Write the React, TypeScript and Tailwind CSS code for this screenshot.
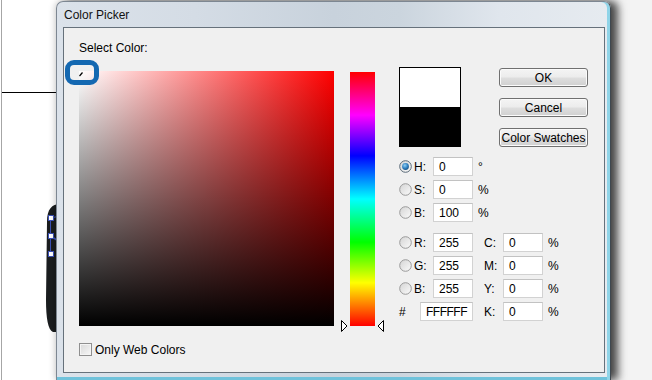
import React from "react";

function Radio({ checked = false }: { checked?: boolean }) {
  return (
    <svg width="13" height="13" viewBox="0 0 13 13" className="shrink-0">
      <defs>
        <linearGradient id="rfill" x1="0" y1="0" x2="1" y2="1">
          <stop offset="0" stopColor="#d4d4d4" />
          <stop offset="1" stopColor="#fbfbfb" />
        </linearGradient>
        <radialGradient id="rdot" cx="0.4" cy="0.35" r="0.7">
          <stop offset="0" stopColor="#8fd0f5" />
          <stop offset="0.6" stopColor="#2f7fc0" />
          <stop offset="1" stopColor="#17507f" />
        </radialGradient>
      </defs>
      <circle cx="6.5" cy="6.5" r="5.8" fill="url(#rfill)" stroke={checked ? "#5a6a78" : "#9a9a9a"} strokeWidth="1" />
      {checked && <circle cx="6.5" cy="6.5" r="3.4" fill="url(#rdot)" />}
    </svg>
  );
}

function Field({ value, w = "w-[40px]", tight = false }: { value: string; w?: string; tight?: boolean }) {
  return (
    <div className={`${w} h-[19px] bg-white border border-[#d2d2d2] border-t-[#c2c2c2] flex items-center pl-[5px] leading-none text-[12px] ${tight ? "tracking-[-0.5px]" : ""}`}>
      {value}
    </div>
  );
}

function HsbRow({ label, value, unit, checked = false }: { label: string; value: string; unit: string; checked?: boolean }) {
  return (
    <div className="flex items-center h-[19px]">
      <Radio checked={checked} />
      <span className="w-[21px] pl-[2px] leading-none">{label}</span>
      <Field value={value} />
      <span className="ml-[5px] leading-none">{unit}</span>
    </div>
  );
}

function RgbRow({ label, value, clabel, cvalue }: { label: string; value: string; clabel: string; cvalue: string }) {
  return (
    <div className="flex items-center h-[19px]">
      <Radio />
      <span className="w-[21px] pl-[2px] leading-none">{label}</span>
      <Field value={value} />
      <span className="ml-[11px] w-[19px] leading-none">{clabel}</span>
      <Field value={cvalue} />
      <span className="ml-[5px] leading-none">%</span>
    </div>
  );
}

function VButton({ children }: { children: React.ReactNode }) {
  return (
    <div className="w-[89px] h-[19px] rounded-[3px] border border-[#707070] bg-[linear-gradient(to_bottom,#f4f4f4_0%,#ececec_48%,#dedede_52%,#d0d0d0_100%)] shadow-[inset_0_0_0_1px_#fbfbfb] flex items-center justify-center leading-none text-[12px] whitespace-nowrap">
      {children}
    </div>
  );
}

export default function App() {
  return (
    <div className="relative w-[652px] h-[380px] overflow-hidden bg-[#f3f3f3] font-['Liberation_Sans',Arial,sans-serif] text-[12px] text-black">
      <div className="flex h-full">
        <div className="w-[100px] h-full bg-white">
          <svg width="100" height="380" viewBox="0 0 100 380">
            <line x1="1.5" y1="0" x2="1.5" y2="380" stroke="#a6a6a6" strokeWidth="1" />
            <line x1="2" y1="92.5" x2="60" y2="92.5" stroke="#000" strokeWidth="1" />
            <path d="M60 204 C52 204 47 209 47 222 L46 300 C46 318 48 330 53 332 L60 332 Z" fill="#1a1d1f" />
            <line x1="50.5" y1="218" x2="50.5" y2="254" stroke="#3b50b5" strokeWidth="1" />
            <line x1="50.5" y1="218" x2="60" y2="216" stroke="#3b50b5" strokeWidth="1" />
            <line x1="50.5" y1="236" x2="60" y2="242" stroke="#3b50b5" strokeWidth="1.5" />
            <rect x="48.5" y="215.5" width="5" height="5" fill="#fff" stroke="#3b50b5" />
            <rect x="48.5" y="233.5" width="5" height="5" fill="#fff" stroke="#3b50b5" />
            <rect x="48.5" y="251.5" width="5" height="5" fill="#fff" stroke="#3b50b5" />
          </svg>
        </div>
      </div>

      {/* Dialog window */}
      <div className="absolute left-[56px] top-[1px] w-[555px] h-[379px] flex flex-col rounded-t-[7px] border border-b-0 border-[#7d8792] border-r-[#3f4850] bg-[linear-gradient(to_right,#dbe2ea_0%,#d4dce5_25%,#c8d2dc_50%,#cbd5de_62%,#e0e6ed_80%,#e6ebf0_100%)] shadow-[inset_-3px_0_0_#8fd4e8,inset_0_-3px_0_#6fc2db,7px_0_8px_rgba(0,0,0,0.7),-2px_0_6px_rgba(0,0,0,0.15)]">
        <div className="h-[25px] flex items-center pl-[7px] leading-[14px] text-[12px] text-[#111]">
          Color Picker
        </div>
        <div className="ml-[6px] mr-[5px] h-[346px] border border-[#66717b] bg-[#f0f0f0] flex">
          {/* Left column */}
          <div className="pl-[15px] pt-[13px] flex flex-col">
            <div className="h-[14px] leading-[14px]">Select Color:</div>
            <div className="mt-[16px] flex">
              <div className="relative w-[255px] h-[255px] bg-[linear-gradient(to_bottom,rgba(0,0,0,0),#000),linear-gradient(to_right,#fff,#f00)]">
                <svg width="6" height="6" viewBox="0 0 6 6" className="absolute left-0 top-0">
                  <line x1="0.5" y1="5" x2="3.5" y2="1.5" stroke="#000" strokeWidth="1.2" />
                </svg>
              </div>
              <div className="relative ml-[16px] mt-[1px] w-[25px] h-[254px] bg-[linear-gradient(to_bottom,#f00_0%,#f0f_17%,#00f_33%,#0ff_50%,#0f0_67%,#ff0_83%,#f00_100%)]">
                <svg width="7" height="12" viewBox="0 0 7 12" className="absolute left-[-9px] bottom-[-6px]">
                  <path d="M0.5 0.5 L6 6 L0.5 11.5 Z" fill="#fff" stroke="#000" strokeWidth="1" />
                </svg>
                <svg width="7" height="12" viewBox="0 0 7 12" className="absolute right-[-9px] bottom-[-6px]">
                  <path d="M6.5 0.5 L1 6 L6.5 11.5 Z" fill="#fff" stroke="#000" strokeWidth="1" />
                </svg>
              </div>
            </div>
            <div className="mt-[17px] flex items-center h-[13px]">
              <div className="w-[13px] h-[13px] border border-[#8f8f8f] bg-[linear-gradient(135deg,#d8d8d8,#f7f7f7)] shadow-[inset_0_0_0_1px_#f4f4f4]" />
              <span className="ml-[3px] leading-[14px]">Only Web Colors</span>
            </div>
          </div>

          {/* Right section */}
          <div className="ml-[24px] flex flex-col">
            <div className="flex">
              <div className="mt-[39px] w-[62px] h-[80px] border border-black flex flex-col">
                <div className="flex-1 bg-white" />
                <div className="flex-1 bg-black" />
              </div>
              <div className="ml-[38px] mt-[40px] flex flex-col gap-[11px]">
                <VButton>OK</VButton>
                <VButton>Cancel</VButton>
                <VButton>Color Swatches</VButton>
              </div>
            </div>
            <div className="mt-[10px] flex flex-col gap-[4px]">
              <HsbRow label="H:" value="0" unit="°" checked />
              <HsbRow label="S:" value="0" unit="%" />
              <HsbRow label="B:" value="100" unit="%" />
            </div>
            <div className="mt-[11px] flex flex-col gap-[4px]">
              <RgbRow label="R:" value="255" clabel="C:" cvalue="0" />
              <RgbRow label="G:" value="255" clabel="M:" cvalue="0" />
              <RgbRow label="B:" value="255" clabel="Y:" cvalue="0" />
              <div className="flex items-center h-[19px]">
                <span className="w-[21px] leading-none">#</span>
                <Field value="FFFFFF" w="w-[53px]" tight />
                <span className="ml-[11px] w-[19px] leading-none">K:</span>
                <Field value="0" />
                <span className="ml-[5px] leading-none">%</span>
              </div>
            </div>
          </div>
        </div>
      </div>

      {/* Blue annotation highlight */}
      <div className="absolute left-[65px] top-[60px] w-[34px] h-[25px] rounded-[9px] border-[5px] border-[#1468b1]" />
    </div>
  );
}
